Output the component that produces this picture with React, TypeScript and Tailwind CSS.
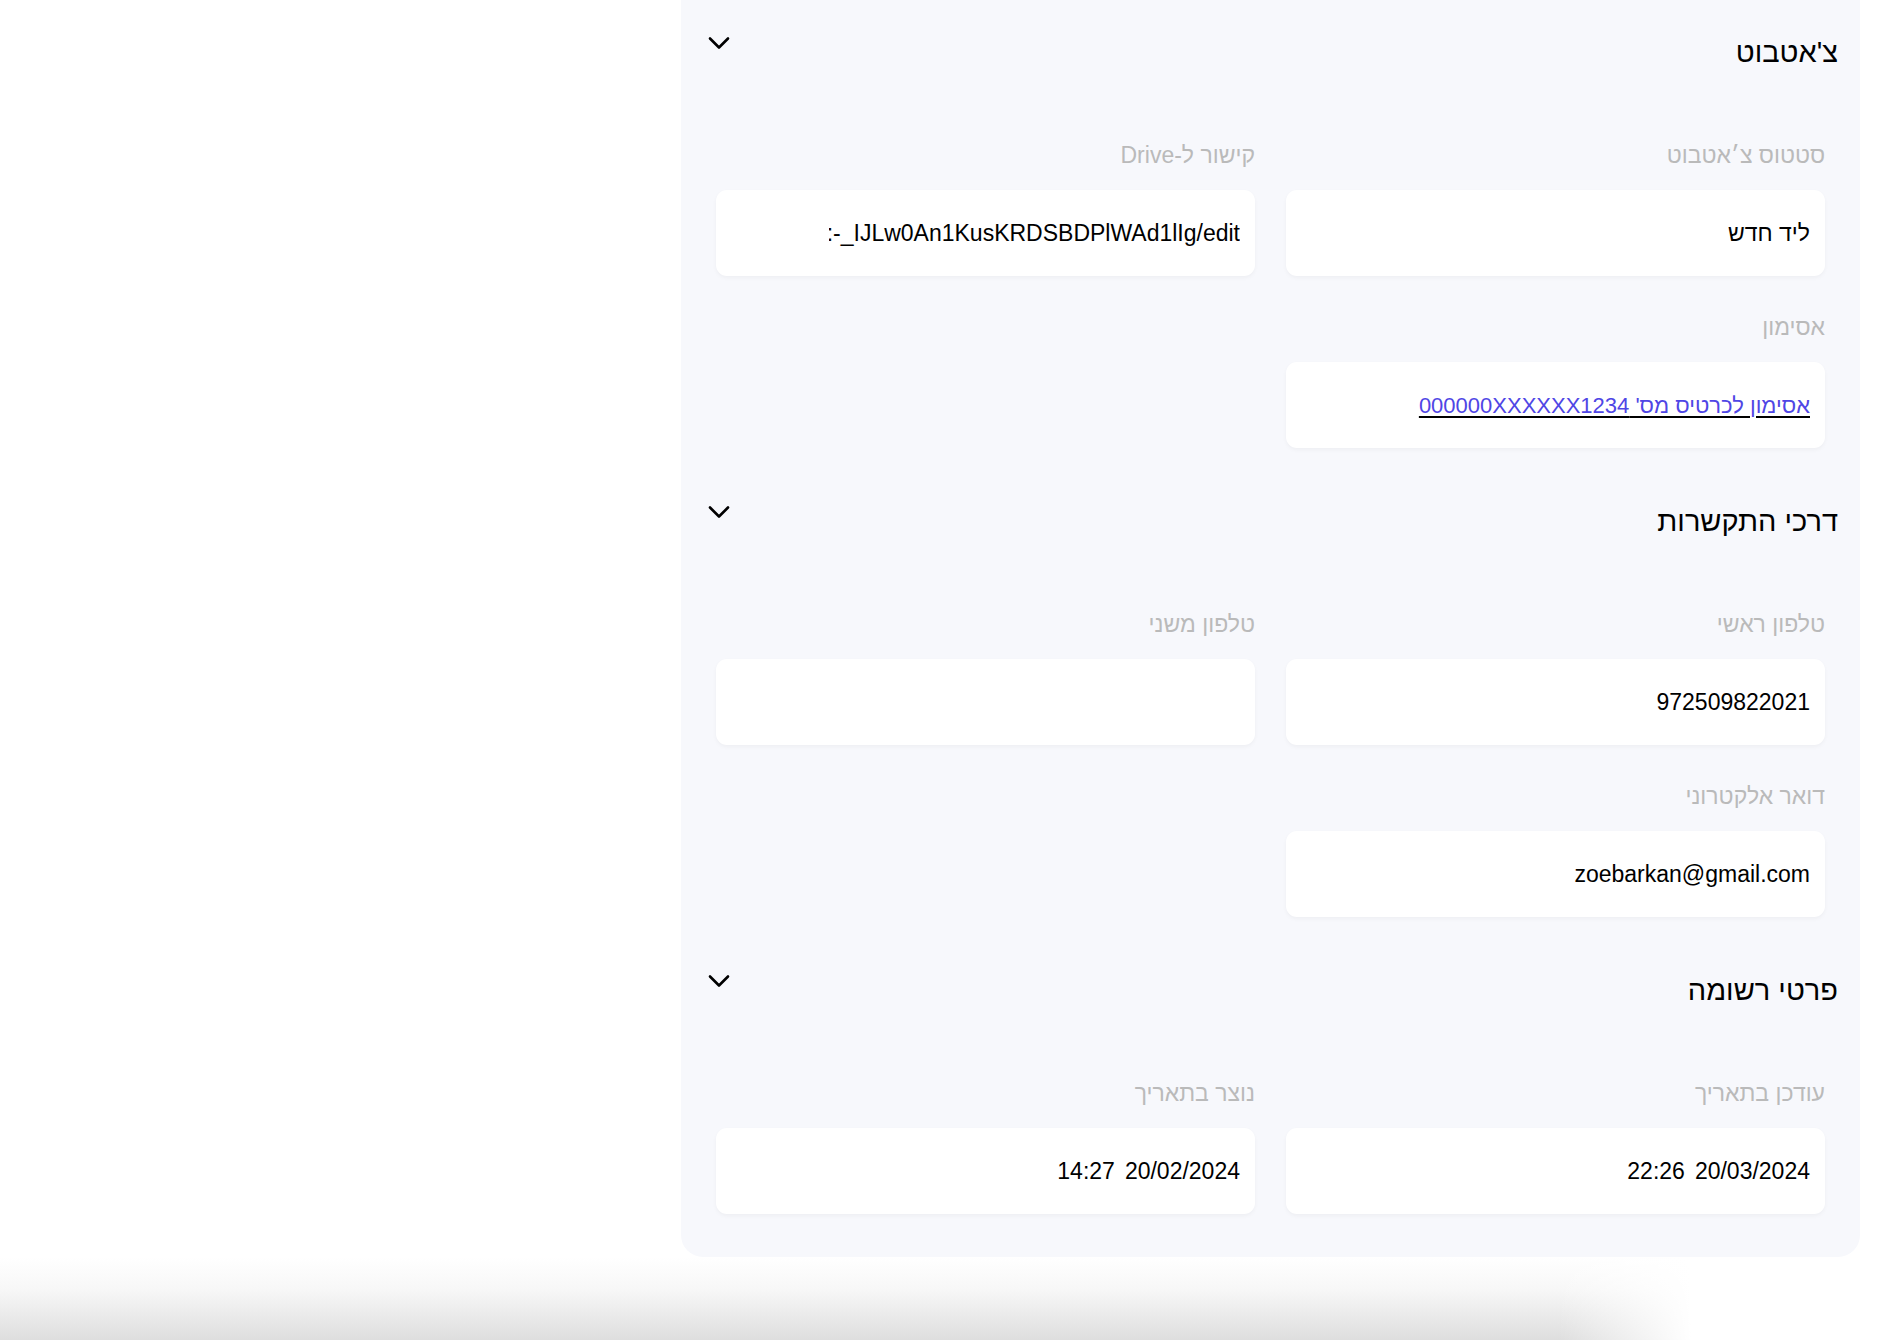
import React from "react";

function Chevron() {
  return (
    <svg width="24" height="14" viewBox="0 0 24 14" fill="none" className="mt-[4px] shrink-0">
      <path d="M3 2.5 L12 11.5 L21 2.5" stroke="#000" strokeWidth="2.6" strokeLinecap="round" strokeLinejoin="round" />
    </svg>
  );
}

function Header({ title }: { title: string }) {
  return (
    <div className="flex items-start justify-between pr-[22px] pl-[26px]">
      <h2 className="text-[29px] leading-[40px] text-black font-normal">{title}</h2>
      <Chevron />
    </div>
  );
}

function Field({ label, children }: { label: string; children?: React.ReactNode }) {
  return (
    <div className="flex flex-col">
      <div className="text-[23px] leading-[30px] text-[#bababa] mb-[20px]">{label}</div>
      <div className="h-[86px] bg-white rounded-[11px] shadow-[0_2px_4px_rgba(0,0,0,0.04)] flex items-center px-[15px] text-[23px] text-black">
        {children}
      </div>
    </div>
  );
}

function Section({ title, children }: { title: string; children: React.ReactNode }) {
  return (
    <section className="flex flex-col">
      <Header title={title} />
      <div className="grid grid-cols-2 gap-x-[31px] gap-y-[36px] px-[35px] mt-[68px]">{children}</div>
    </section>
  );
}

function DateTime({ date, time }: { date: string; time: string }) {
  return (
    <div className="flex items-center gap-[10px]">
      <span dir="ltr">{date}</span>
      <span dir="ltr">{time}</span>
    </div>
  );
}

export default function App() {
  return (
    <div dir="ltr" className="h-[1340px] overflow-hidden bg-white flex flex-col font-['Liberation_Sans',Arial,sans-serif]">
      <div className="flex justify-end pr-[40px]">
        <div dir="rtl" className="w-[1179px] bg-[#f7f8fc] rounded-b-[22px] pt-[32px] pb-[43px] flex flex-col gap-[53px]">
          <Section title="צ'אטבוט">
            <Field label="סטטוס צ׳אטבוט">ליד חדש</Field>
            <Field label="קישור ל-Drive">
              <div className="w-[411px] overflow-hidden whitespace-nowrap">
                <span dir="ltr">https://docs.google.com/document/d/1Qx7rTb:-_IJLw0An1KusKRDSBDPlWAd1lIg/edit</span>
              </div>
            </Field>
            <Field label="אסימון">
              <a href="#" className="text-[22px] text-[#4f46e5] underline decoration-black decoration-[2px] underline-offset-[3px]">
                אסימון לכרטיס מס' 000000XXXXXX1234
              </a>
            </Field>
            <div />
          </Section>

          <Section title="דרכי התקשרות">
            <Field label="טלפון ראשי">
              <span dir="ltr">972509822021</span>
            </Field>
            <Field label="טלפון משני" />
            <Field label="דואר אלקטרוני">
              <span dir="ltr">zoebarkan@gmail.com</span>
            </Field>
            <div />
          </Section>

          <Section title="פרטי רשומה">
            <Field label="עודכן בתאריך">
              <DateTime date="20/03/2024" time="22:26" />
            </Field>
            <Field label="נוצר בתאריך">
              <DateTime date="20/02/2024" time="14:27" />
            </Field>
          </Section>
        </div>
      </div>
      <div className="flex-1 bg-[linear-gradient(to_right,rgba(255,255,255,0)_0%,rgba(255,255,255,0)_82%,#ffffff_89%),linear-gradient(to_bottom,#ffffff_0%,#f7f7f7_40%,#dedede_100%)]" />
    </div>
  );
}
